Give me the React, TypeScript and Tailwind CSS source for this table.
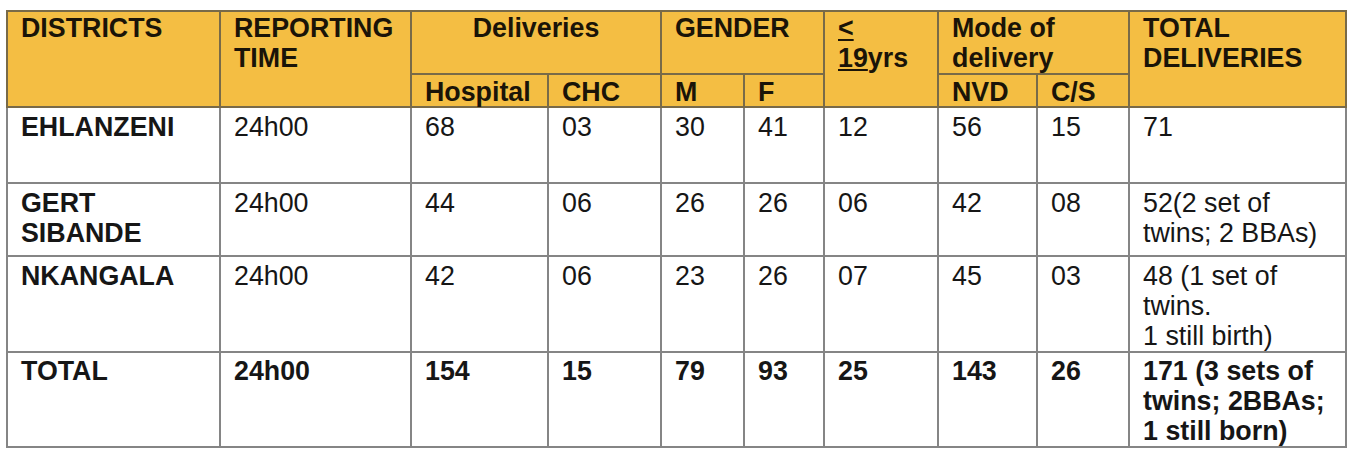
const rows = [
  {
    district: ["EHLANZENI"],
    time: "24h00",
    values: ["68", "03", "30", "41", "12", "56", "15"],
    total: ["71"],
    height: "h-[76px]",
  },
  {
    district: ["GERT", "SIBANDE"],
    time: "24h00",
    values: ["44", "06", "26", "26", "06", "42", "08"],
    total: ["52(2 set of", "twins; 2 BBAs)"],
    height: "h-[73px]",
  },
  {
    district: ["NKANGALA"],
    time: "24h00",
    values: ["42", "06", "23", "26", "07", "45", "03"],
    total: ["48 (1 set of", "twins.", "1 still birth)"],
    height: "h-[96px]",
  },
];

// header cells: top row gets two lines, second row is squeezed into 33px
const head =
  "border-2 border-[#786a48] bg-[#f4be43] px-[13px] align-top font-bold text-[#1a1408]";
const top = `${head} pt-[1px] leading-[30px] text-left`;
const sub = `${head} pt-[4px] leading-[27px] text-left`;
const cell = "border-2 border-[#858585] px-[13px] pt-[4px] text-left align-top";
const totalCell = "border-2 border-[#858585] px-[13px] pt-[3px] text-left align-top";

function Lines({ lines }: { lines: string[] }) {
  return (
    <>
      {lines.map((l, i) => (
        <span key={i} className="block">
          {l}
        </span>
      ))}
    </>
  );
}

export default function App() {
  return (
    <div className="min-h-screen bg-white pl-[6px] pt-[10px] font-['Liberation_Sans',Arial,sans-serif] text-[26.8px] leading-[30px] text-[#161616]">
      <table className="w-[1339px] table-fixed border-collapse">
        <colgroup>
          <col className="w-[213px]" />
          <col className="w-[191px]" />
          <col className="w-[137px]" />
          <col className="w-[113px]" />
          <col className="w-[83px]" />
          <col className="w-[80px]" />
          <col className="w-[114px]" />
          <col className="w-[99px]" />
          <col className="w-[92px]" />
          <col className="w-[217px]" />
        </colgroup>
        <thead>
          <tr className="h-[63px]">
            <th rowSpan={2} className={top}>
              DISTRICTS
            </th>
            <th rowSpan={2} className={top}>
              REPORTING TIME
            </th>
            <th
              colSpan={2}
              className={`${head} pt-[1px] text-center leading-[30px]`}
            >
              Deliveries
            </th>
            <th colSpan={2} className={top}>
              GENDER
            </th>
            <th rowSpan={2} className={top}>
              <span className="block underline decoration-2 underline-offset-2">
                &lt;
              </span>
              <span className="block">
                <span className="underline decoration-2 underline-offset-2">
                  19
                </span>
                yrs
              </span>
            </th>
            <th colSpan={2} className={`${top} whitespace-nowrap`}>
              <span className="block">Mode of</span>
              <span className="block">delivery</span>
            </th>
            <th rowSpan={2} className={top}>
              TOTAL DELIVERIES
            </th>
          </tr>
          <tr className="h-[33px]">
            <th className={sub}>Hospital</th>
            <th className={sub}>CHC</th>
            <th className={sub}>M</th>
            <th className={sub}>F</th>
            <th className={sub}>NVD</th>
            <th className={sub}>C/S</th>
          </tr>
        </thead>
        <tbody>
          {rows.map((r) => (
            <tr key={r.district.join(" ")} className={r.height}>
              <td className={`${cell} font-bold`}>
                <Lines lines={r.district} />
              </td>
              <td className={cell}>{r.time}</td>
              {r.values.map((v, i) => (
                <td key={i} className={cell}>
                  {v}
                </td>
              ))}
              <td className={cell}>
                <Lines lines={r.total} />
              </td>
            </tr>
          ))}
          <tr className="h-[95px] font-bold">
            <td className={totalCell}>TOTAL</td>
            <td className={totalCell}>24h00</td>
            {["154", "15", "79", "93", "25", "143", "26"].map((v, i) => (
              <td key={i} className={totalCell}>
                {v}
              </td>
            ))}
            <td className={totalCell}>
              <Lines
                lines={["171 (3 sets of", "twins; 2BBAs;", "1 still born)"]}
              />
            </td>
          </tr>
        </tbody>
      </table>
    </div>
  );
}
